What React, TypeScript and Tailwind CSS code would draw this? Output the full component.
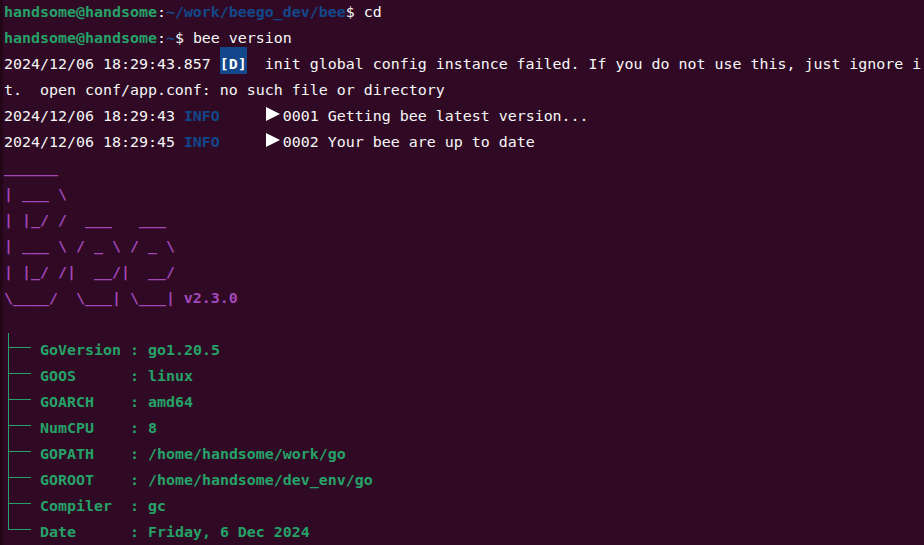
import React from "react";

const G = "text-[#26a269] font-bold";
const B = "text-[#12488b] font-bold";
const P = "text-[#a347ba] font-bold";

function Row({ children }: { children?: React.ReactNode }) {
  return <div className="h-[26px] whitespace-pre">{children}</div>;
}

function Tri() {
  return (
    <span className="inline-block w-[18px] pl-[1px]">
      <svg width="14" height="14" viewBox="0 0 14 14" className="inline-block align-baseline">
        <polygon points="0,0 14,7 0,14" fill="#ffffff" />
      </svg>
    </span>
  );
}

const tree: [string, string][] = [
  ["GoVersion", "go1.20.5"],
  ["GOOS     ", "linux"],
  ["GOARCH   ", "amd64"],
  ["NumCPU   ", "8"],
  ["GOPATH   ", "/home/handsome/work/go"],
  ["GOROOT   ", "/home/handsome/dev_env/go"],
  ["Compiler ", "gc"],
  ["Date     ", "Friday, 6 Dec 2024"],
];

const art = [
  "______",
  "| ___ \\",
  "| |_/ /  ___   ___",
  "| ___ \\ / _ \\ / _ \\",
  "| |_/ /|  __/|  __/",
];

export default function App() {
  return (
    <div className="w-[924px] h-[545px] overflow-hidden bg-[#300a24] flex">
      <div className="w-[3px] shrink-0 bg-[#230718]" />
      <div
        className="flex-1 pl-[1px] -mt-[1px] text-[14.95px] leading-[26px] text-[#f7f7f7]"
        style={{ fontFamily: '"DejaVu Sans Mono", "Liberation Mono", monospace' }}
      >
        <Row>
          <span className={G}>handsome@handsome</span>:<span className={B}>~/work/beego_dev/bee</span>$ cd
        </Row>
        <Row>
          <span className={G}>handsome@handsome</span>:<span className={B}>~</span>$ bee version
        </Row>
        <Row>
          2024/12/06 18:29:43.857{" "}
          <span className="bg-[#12488b] font-bold text-white pt-[8px] pb-[1px]">[D]</span>
          {"  init global config instance failed. If you do not use this, just ignore i"}
        </Row>
        <Row>{"t.  open conf/app.conf: no such file or directory"}</Row>
        <Row>
          2024/12/06 18:29:43 <span className={B}>INFO</span>
          {"     "}
          <Tri />
          0001 Getting bee latest version...
        </Row>
        <Row>
          2024/12/06 18:29:45 <span className={B}>INFO</span>
          {"     "}
          <Tri />
          0002 Your bee are up to date
        </Row>
        {art.map((l, i) => (
          <Row key={i}>
            <span className={P}>{l}</span>
          </Row>
        ))}
        <Row>
          <span className={P}>{"\\____/  \\___| \\___| v2.3.0"}</span>
        </Row>
        <Row />
        {tree.map(([k, v], i) => {
          const last = i === tree.length - 1;
          return (
            <div key={k} className="h-[26px] flex whitespace-pre">
              <div className="relative w-[36px] h-[26px] shrink-0">
                <span
                  className={
                    "absolute left-[4px] w-px bg-[#26a269] -top-[4px] " +
                    (last ? "h-[15px]" : "h-[30px]")
                  }
                />
                <span className="absolute left-[4px] top-[10px] w-[23px] h-px bg-[#26a269]" />
              </div>
              <span className={G}>
                {k} : {v}
              </span>
            </div>
          );
        })}
      </div>
    </div>
  );
}
